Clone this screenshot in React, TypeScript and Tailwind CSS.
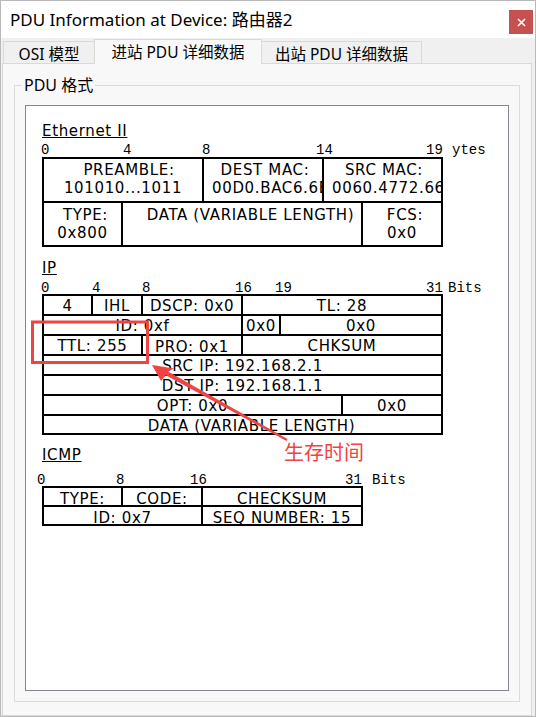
import React from 'react'

// fonts
const ui = "font-['Noto_Sans','Noto_Sans_CJK_SC',sans-serif] text-black"
const pdu = "font-['DejaVu_Sans','Verdana',sans-serif] text-[15px] tracking-[0.65px] text-black"
const mono = "font-['Liberation_Mono','Courier_New',monospace] text-[14px] leading-[16px] text-black"

type Mark = [string, number]

function Ruler({ marks, className }: { marks: Mark[]; className: string }) {
    return (
        <div className={`relative w-[460px] ${mono} ${className}`}>
            {marks.map(([label, x]) => (
                <span key={label + x} className="absolute top-0 whitespace-pre" style={{ left: x }}>
                    {label}
                </span>
            ))}
        </div>
    )
}

function Heading({ text, className }: { text: string; className: string }) {
    return (
        <div className={`${pdu} leading-[18px] tracking-[0.2px] underline decoration-1 ${className}`}>
            {text}
        </div>
    )
}

// one cell of an IP / ICMP row
function C({ w, first, children, pt = 'pt-[1px]' }: { w: string; first?: boolean; children: React.ReactNode; pt?: string }) {
    return (
        <div
            className={`${w} ${first ? '' : 'border-l-2'} overflow-hidden whitespace-nowrap border-black text-center leading-[18px] ${pt}`}
        >
            {children}
        </div>
    )
}

export default function App() {
    const ethMarks: Mark[] = [['0', -1], ['4', 81], ['8', 160], ['14', 274], ['19', 384], ['ytes', 410]]
    const ipMarks: Mark[] = [['0', -1], ['4', 50], ['8', 100], ['16', 193], ['19', 233], ['31', 384], ['Bits', 406]]
    const icmpMarks: Mark[] = [['0', -5], ['8', 74], ['16', 148], ['31', 303], ['Bits', 330]]

    return (
        <div className="relative flex h-[717px] w-[536px] flex-col border border-[#b9b9b9] bg-[#f0f0f0]">
            {/* Barra de título */}
            <div className="flex h-[37px] shrink-0 items-center justify-between bg-white">
                <span className={`${ui} ml-[9px] text-[17px] leading-[22px]`}>PDU Information at Device: 路由器2</span>
                <button className="mr-[2px] mt-[9px] flex h-[24px] w-[24px] items-center justify-center self-start bg-[#c75050]">
                    <svg width="9" height="9" viewBox="0 0 9 9">
                        <path d="M1 1L8 8M8 1L1 8" stroke="#fff" strokeWidth="1.6" />
                    </svg>
                </button>
            </div>

            {/* Abas */}
            <div className="flex h-[25px] shrink-0 items-end pl-[2px]">
                <div className={`${ui} flex h-[22px] w-[91px] items-center justify-center border border-b-0 border-r-0 border-[#d9d9d9] pt-[2px] text-[15.5px] leading-[20px]`}>
                    OSI 模型
                </div>
                <div className={`${ui} relative z-10 -mb-px flex h-[25px] w-[168px] items-center justify-center border border-b-0 border-[#d9d9d9] bg-[#f8f8f8] text-[15.5px] leading-[20px]`}>
                    进站 PDU 详细数据
                </div>
                <div className={`${ui} flex h-[22px] w-[160px] items-center justify-center border border-b-0 border-l-0 border-[#d9d9d9] pt-[2px] text-[15.5px] leading-[20px]`}>
                    出站 PDU 详细数据
                </div>
            </div>

            {/* Painel */}
            <div className="ml-[1px] mr-[3px] flex flex-1 flex-col border border-[#d9d9d9] bg-[#f8f8f8]">
                <div className="mx-[11px] mb-[13px] mt-[21px] flex flex-1 flex-col border border-[#dcdcdc]">
                    <div className={`${ui} -mt-[10px] ml-[7px] w-fit bg-[#f8f8f8] px-[2px] text-[16px] leading-[18px]`}>PDU 格式</div>

                    <div className="mx-[10px] mb-[10px] mt-[11px] flex flex-1 flex-col border border-[#828790] bg-white pl-[16px] pt-[16px]">
                        {/* Ethernet II */}
                        <Heading text="Ethernet II" className="w-fit" />
                        <Ruler marks={ethMarks} className="mt-[2px] h-[15px]" />
                        <div className={`${pdu} w-[401px] border-2 border-black`}>
                            <div className="flex h-[42px] leading-[18px]">
                                <div className="w-[158px] pt-[2px] text-center">
                                    <div className="pl-[12px]">PREAMBLE:</div>
                                    <div>101010...1011</div>
                                </div>
                                <div className="w-[120px] overflow-hidden whitespace-nowrap border-l-2 border-black pt-[2px]">
                                    <div className="pl-[4px] text-center">DEST MAC:</div>
                                    <div className="pl-[8px]">00D0.BAC6.6E01</div>
                                </div>
                                <div className="flex-1 overflow-hidden whitespace-nowrap border-l-2 border-black pt-[2px]">
                                    <div className="pl-[3px] text-center">SRC MAC:</div>
                                    <div className="pl-[8px]">0060.4772.6601</div>
                                </div>
                            </div>
                            <div className="flex h-[44px] border-t-2 border-black leading-[18px]">
                                <div className="w-[77px] pt-[3px] text-center">
                                    <div className="pl-[6px]">TYPE:</div>
                                    <div>0x800</div>
                                </div>
                                <div className="w-[240px] border-l-2 border-black pl-[17px] pt-[3px] text-center">DATA (VARIABLE LENGTH)</div>
                                <div className="flex-1 border-l-2 border-black pt-[3px] text-center">
                                    <div className="pl-[6px]">FCS:</div>
                                    <div>0x0</div>
                                </div>
                            </div>
                        </div>

                        {/* IP */}
                        <Heading text="IP" className="mt-[12px] w-fit" />
                        <Ruler marks={ipMarks} className="mt-[3px] h-[14px]" />
                        <div className={`${pdu} w-[401px] border-2 border-black`}>
                            <div className="flex h-[18px]">
                                <C w="w-[47px]" first>4</C>
                                <C w="w-[50px]">IHL</C>
                                <C w="w-[100px]">DSCP: 0x0</C>
                                <C w="flex-1">TL: 28</C>
                            </div>
                            <div className="flex h-[20px] border-t-2 border-black">
                                <C w="w-[197px]" first>ID: 0xf</C>
                                <C w="w-[38px]">0x0</C>
                                <C w="flex-1">0x0</C>
                            </div>
                            <div className="flex h-[20px] border-t-2 border-black">
                                <C w="w-[97px]" first>TTL: 255</C>
                                <C w="w-[100px]" pt="pt-[2px]">PRO: 0x1</C>
                                <C w="flex-1">CHKSUM</C>
                            </div>
                            <div className="flex h-[20px] border-t-2 border-black">
                                <C w="flex-1" first>SRC IP: 192.168.2.1</C>
                            </div>
                            <div className="flex h-[20px] border-t-2 border-black">
                                <C w="flex-1" first>DST IP: 192.168.1.1</C>
                            </div>
                            <div className="flex h-[20px] border-t-2 border-black">
                                <C w="w-[297px]" first>OPT: 0x0</C>
                                <C w="flex-1">0x0</C>
                            </div>
                            <div className="flex h-[19px] border-t-2 border-black">
                                <C w="flex-1 pl-[18px]" first>DATA (VARIABLE LENGTH)</C>
                            </div>
                        </div>

                        {/* ICMP */}
                        <Heading text="ICMP" className="mt-[11px] w-fit" />
                        <Ruler marks={icmpMarks} className="mt-[8px] h-[14px]" />
                        <div className={`${pdu} w-[321px] border-2 border-black`}>
                            <div className="flex h-[17px]">
                                <C w="w-[77px]" first pt="pt-[2px]">TYPE:</C>
                                <C w="w-[80px]" pt="pt-[2px]">CODE:</C>
                                <C w="flex-1" pt="pt-[2px]">CHECKSUM</C>
                            </div>
                            <div className="flex h-[19px] border-t-2 border-black">
                                <C w="w-[157px]" first pt="pt-[2px]">ID: 0x7</C>
                                <C w="flex-1" pt="pt-[2px]">SEQ NUMBER: 15</C>
                            </div>
                        </div>
                    </div>
                </div>
            </div>

            {/* Anotação */}
            <svg className="pointer-events-none absolute left-[-1px] top-[-1px]" width="536" height="717">
                <rect x="32.5" y="322" width="115" height="40.5" fill="none" stroke="#ef4444" strokeWidth="3" />
                <polygon
                    points="152,365 174,368.5 168,371.4 287.5,439.1 286.5,440.9 165.8,375.2 161,381"
                    fill="#ef4444"
                />
            </svg>
            <div className="absolute left-[283px] top-[441px] font-['Noto_Sans_CJK_SC',sans-serif] text-[20px] leading-none text-[#ef4444]">
                生存时间
            </div>
        </div>
    )
}
